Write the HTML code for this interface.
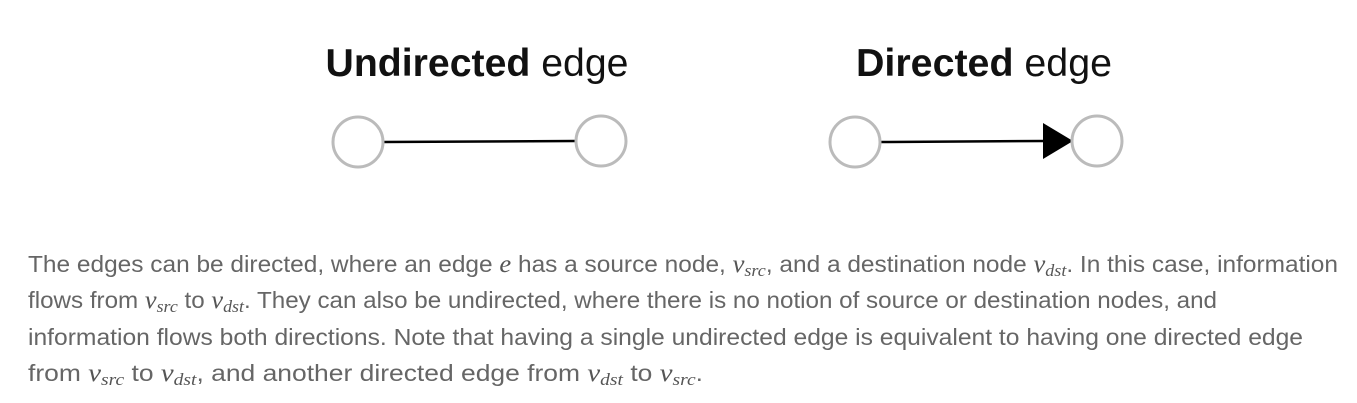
<!DOCTYPE html>
<html><head><meta charset="utf-8"><style>
html,body{margin:0;padding:0;background:#fff;width:1357px;height:403px;overflow:hidden}
svg{display:block}
.t{font-family:"Liberation Sans",sans-serif;font-size:23px;fill:#666}
.m{font-family:"Liberation Serif",serif;font-style:italic;fill:#555}
</style></head><body>
<svg width="1357" height="403" xmlns="http://www.w3.org/2000/svg">
<text x="477" y="76" text-anchor="middle" font-family="Liberation Sans,sans-serif" font-size="39" fill="#111" textLength="303" lengthAdjust="spacingAndGlyphs"><tspan font-weight="bold">Undirected</tspan> edge</text>
<text x="984" y="76" text-anchor="middle" font-family="Liberation Sans,sans-serif" font-size="39" fill="#111" textLength="256" lengthAdjust="spacingAndGlyphs"><tspan font-weight="bold">Directed</tspan> edge</text>
<line x1="383" y1="142" x2="576" y2="141" stroke="#000" stroke-width="2.5"/>
<circle cx="358" cy="142" r="25" fill="#fff" stroke="#bbb" stroke-width="3"/>
<circle cx="601" cy="141" r="25" fill="#fff" stroke="#bbb" stroke-width="3"/>
<line x1="880" y1="142" x2="1045" y2="141" stroke="#000" stroke-width="2.5"/>
<polygon points="1043,123 1073,141 1043,159" fill="#000"/>
<circle cx="855" cy="142" r="25" fill="#fff" stroke="#bbb" stroke-width="3"/>
<circle cx="1097" cy="141" r="25" fill="#fff" stroke="#bbb" stroke-width="3"/>

<text class="t" x="28" y="272" textLength="1310" lengthAdjust="spacingAndGlyphs">The edges can be directed, where an edge <tspan class="m" font-size="25">e</tspan> has a source node, <tspan class="m" font-size="25">v</tspan><tspan class="m" font-size="17" dy="4">src</tspan><tspan dy="-4">, and a destination node </tspan><tspan class="m" font-size="25">v</tspan><tspan class="m" font-size="17" dy="4">dst</tspan><tspan dy="-4">. In this case, information</tspan></text>
<text class="t" x="28" y="308" textLength="1189" lengthAdjust="spacingAndGlyphs">flows from <tspan class="m" font-size="25">v</tspan><tspan class="m" font-size="17" dy="4">src</tspan><tspan dy="-4"> to </tspan><tspan class="m" font-size="25">v</tspan><tspan class="m" font-size="17" dy="4">dst</tspan><tspan dy="-4">. They can also be undirected, where there is no notion of source or destination nodes, and</tspan></text>
<text class="t" x="28" y="345" textLength="1275" lengthAdjust="spacingAndGlyphs">information flows both directions. Note that having a single undirected edge is equivalent to having one directed edge</text>
<text class="t" x="28" y="381" textLength="675" lengthAdjust="spacingAndGlyphs">from <tspan class="m" font-size="25">v</tspan><tspan class="m" font-size="17" dy="4">src</tspan><tspan dy="-4"> to </tspan><tspan class="m" font-size="25">v</tspan><tspan class="m" font-size="17" dy="4">dst</tspan><tspan dy="-4">, and another directed edge from </tspan><tspan class="m" font-size="25">v</tspan><tspan class="m" font-size="17" dy="4">dst</tspan><tspan dy="-4"> to </tspan><tspan class="m" font-size="25">v</tspan><tspan class="m" font-size="17" dy="4">src</tspan><tspan dy="-4">.</tspan></text>
</svg>
</body></html>
